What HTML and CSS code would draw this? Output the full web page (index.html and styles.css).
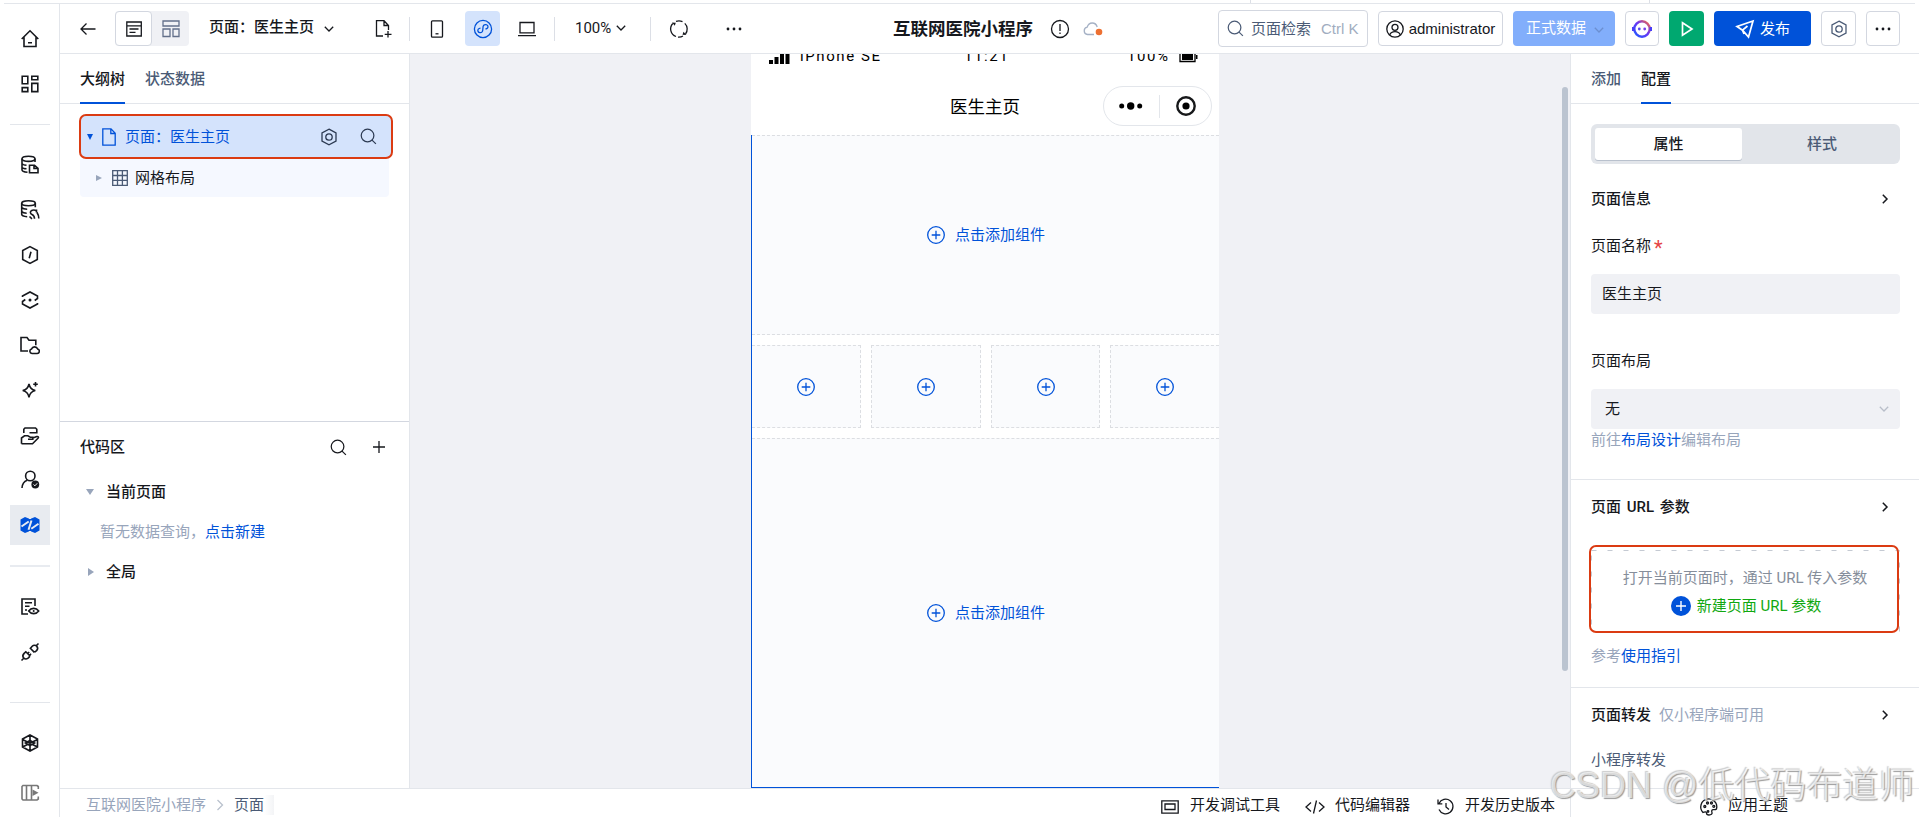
FILE: index.html
```html
<!DOCTYPE html>
<html lang="zh-CN">
<head>
<meta charset="utf-8">
<title>互联网医院小程序</title>
<link rel="stylesheet" href="styles.css">
</head>
<body>
<svg class="defs" width="0" height="0">
  <symbol id="search" viewBox="0 0 18 18"><circle cx="8" cy="8" r="6.7"/><path d="M12.8 12.8l4 4"/></symbol>
  <symbol id="gearhex" viewBox="0 0 18 18"><path d="M9 1.2l7 3.6v8.4l-7 3.6-7-3.6V4.800z"/><circle cx="9" cy="9" r="3.200"/></symbol>
  <symbol id="down" viewBox="0 0 10 8"><path d="M.8 1.800L5 6l4.200-4.200"/></symbol>
  <symbol id="right" viewBox="0 0 8 10"><path d="M1.800.8L6 5 1.800 9.200"/></symbol>
  <symbol id="addc" viewBox="0 0 18 18"><circle cx="9" cy="9" r="8.300"/><path d="M9 4.700v8.600M4.700 9h8.600"/></symbol>
</svg>
<div class="app">
  <div class="topstrip"><i class="tick t1"></i><i class="tick t2"></i></div>
  <div class="main">
    <nav class="rail">
      <a class="ri"><svg viewBox="0 0 20 20"><path d="M1.700 10L10 1.800 18.300 10M4 8.200v9.300h12V8.200M8 13.800h4"/></svg></a>
      <a class="ri g5"><svg viewBox="0 0 20 20"><path d="M2.200 2.200h5.600v7.600H2.200zM11.800 2.200h6v3.600h-6zM11.800 9.400h6v8.200h-6zM2.200 13.600h5.600v4H2.200z"/></svg></a>
      <i class="rdiv g20"></i>
      <a class="ri g20"><svg viewBox="0 0 20 20"><ellipse cx="8.500" cy="3.800" rx="6.500" ry="2.600"/><path d="M2 3.800v11c0 1.400 2.500 2.300 5.500 2.500M15 3.800V7M2 8.500c.5 1 2 1.600 4.500 1.800M2 12.300c.5.800 2 1.400 4.500 1.500M9.500 10.300h5l3.500 3v4.500H9.500zM14 10.500v3h3.800"/></svg></a>
      <a class="ri g5"><svg viewBox="0 0 20 20"><ellipse cx="8.500" cy="3.300" rx="6.800" ry="2.500"/><path d="M1.700 3.300v11c0 1.300 2.500 2.200 5.500 2.400M15.300 3.300v4M1.700 7.500c1 1.200 3 1.700 5.500 1.700M1.700 11.500c1 1.200 3 1.700 5 1.700M14.500 18.800c0-2.500-.7-3.500-2.500-4.300-2-.8-2-2.800-.8-3.700 1.600-1 4-.8 5.300.2M16.500 9.500v3M18.800 18.500c.2-2.500-.5-4-1.800-6M9.500 16.500l2.500 2.300"/></svg></a>
      <a class="ri g5"><svg viewBox="0 0 20 20"><path d="M10 1.600l7.300 3.900v9L10 18.400l-7.300-3.900v-9zM11 6.800L9.200 13.200"/></svg></a>
      <a class="ri g5"><svg viewBox="0 0 20 20"><path d="M2.500 7V6L10 2l7.500 4v2.500l-2.800 2M17.500 13v1L10 18l-7.500-4v-2.500l2.800-2"/><circle class="solid" cx="10" cy="10" r="1.500"/></svg></a>
      <a class="ri g6"><svg viewBox="0 0 20 20"><path d="M8 15H1V1.500h6l2 2.700h6.800v5M12 17.500a2.300 2.300 0 0 1-.5-4.500 3.300 3.300 0 0 1 6.200 0 2.300 2.300 0 0 1-.5 4.500z"/></svg></a>
      <a class="ri g4"><svg viewBox="0 0 20 20"><path d="M9 4c.8 4 2.500 5.700 6.300 6.500C11.500 11.300 9.800 13 9 17.300 8.200 13 6.500 11.300 2.700 10.500 6.500 9.700 8.200 8 9 4zM15.500 2v4.600M13.200 4.300h4.600"/></svg></a>
      <a class="ri g6"><svg viewBox="0 0 20 20"><path d="M3.800 7V3.300L5 2h10.500l1.300 1.300v3.500H9.500M1.500 17.800V12l3-2.200h3.300l2.500 1.400h2.500v2H8M12.800 12l4-1.500c1.500-.3 2.200.7 1.200 1.700l-5.500 5.600h-11"/></svg></a>
      <a class="ri g4"><svg viewBox="0 0 20 20"><circle cx="10.300" cy="6" r="4.700"/><path d="M2 18c.2-4 2-6.600 5.200-7.800"/><circle class="solid" cx="15.300" cy="14.500" r="3.900"/><path class="wh" d="M13.500 14.500l1.400 1.300 2.300-2.500"/></svg></a>
      <a class="ri g5 on"><svg viewBox="0 0 20 20"><path class="fill" d="M.5 4.500L5 2l5 2 5-2 4.500 2.500v11L15 18l-5-2-5 2-4.500-2.500z"/><path class="cut" d="M1.500 11.500L8.700 6.500M18.500 8.800L11.300 13.800M11.500 5.500L8.500 14.800M10 1v3M10 16v3"/></svg></a>
      <i class="rdiv thick g20"></i>
      <a class="ri g20"><svg viewBox="0 0 20 20"><path d="M8 17H2V2h13v7M5 5.800h7M5 9.300h4.500M5 13h2"/><path d="M8.700 14c2.500-3.500 7.500-3.500 10 0-2.500 3.500-7.500 3.500-10 0z"/><circle class="solid" cx="13.700" cy="14" r="1"/></svg></a>
      <a class="ri g5"><svg viewBox="0 0 20 20"><path d="M1.500 18.500l2-2M16.500 3.500l2-2M9.800 5.800l4.600 4.600M5.300 9.300l5 5M10.500 6.200l1.700-2c1.300-1.300 3.400-1.300 4.500-.1s1.100 3.200-.1 4.500l-2 1.500M5.800 9.800l-1.700 1.600c-1.300 1.400-1.500 3.500-.3 4.700s3.300 1 4.600-.2l1.600-1.800M7.700 11.500l1.500-1.500M9.800 13l1.300-1.300"/></svg></a>
      <i class="rdiv g30"></i>
      <a class="ri g20"><svg viewBox="0 0 20 20"><path d="M10 2l7.500 4v8L10 18l-7.500-4V6zM10 2v16M2.500 6.500L17 13.800M17.500 6.500L3 13.800"/><path d="M5.500 10L10 7.500l4.500 2.500L10 12.500z"/></svg></a>
      <a class="ri g10 dim"><svg viewBox="0 0 20 20"><path d="M18.300 6V3.500L17 2.500H3L2 3.500v12.500l1 1h14l1.300-1V13.500M6.500 2.500v14.500M11.500 2.500v14.500"/><path class="solid" d="M12.500 6.500l6 3.200-6 3.200z"/></svg></a>
    </nav>
    <div class="work">
      <header class="hd">
        <svg class="ic back" viewBox="0 0 16 14"><path d="M15.500 7H1M6.500 1.500L1 7l5.500 5.500"/></svg>
        <div class="seg"><span class="on"><svg class="ic" width="18" height="18" viewBox="0 0 18 18"><path d="M1.800 2h14.500v14H1.800zM1.800 5.800h14.500M4.500 9h9M4.500 12.300h6"/></svg></span><span><svg class="ic" width="18" height="18" viewBox="0 0 18 18"><path d="M1 1h16v5H1zM1 9h7v7.500H1zM11 9h6v7.500h-6z"/></svg></span></div>
        <b class="pname">页面：医生主页</b>
        <svg class="ic c1" width="10" height="8"><use href="#down"/></svg>
        <svg class="ic newf" width="18" height="20" viewBox="0 0 18 20"><path d="M8 17H1.500V1.700h7.500l4.500 4.800V11M9 2v4.500h4.500M9.700 15.300h6.800M13 12v6.600"/></svg>
        <i class="vd v1"></i>
        <svg class="ic ph" width="14" height="18" viewBox="0 0 14 18"><rect x="1.500" y=".8" width="11" height="16.400" rx="1"/><path d="M5.500 13.800h3"/></svg>
        <span class="mini"><svg class="ic" width="20" height="20" viewBox="0 0 20 20"><circle cx="10" cy="10" r="8.600"/><path d="M7.500 9.200c-2 .2-3 1.500-2.600 2.800.5 1.800 3 2.200 4.200.8.800-1 .8-2 .8-3.200 0-1.500 0-2.500.8-3.300 1.300-1.300 3.600-.8 4.200.8.400 1.500-.6 2.500-2.400 2.900"/></svg></span>
        <svg class="ic lap" width="20" height="16" viewBox="0 0 20 16"><path d="M3 1.500h14v10.300H3zM1 14.700h18"/></svg>
        <i class="vd v2"></i>
        <span class="zoom">100%</span>
        <svg class="ic c2" width="10" height="8"><use href="#down"/></svg>
        <i class="vd v3"></i>
        <svg class="ic sync" width="20" height="20" viewBox="0 0 20 20"><path d="M3.800 4.500A8 8 0 0 0 7 17.500M9 18.100A8 8 0 0 0 14 17M7 2.400A8 8 0 0 1 13.500 2.700M15.800 4.400A8 8 0 0 1 16.500 15"/><path class="solid" d="M3 3.500l3.800.3-1 3zM17.300 16l-3.800-.3 1-3z"/></svg>
        <svg class="dots d1" width="16" height="4" viewBox="0 0 16 4"><circle cx="2" cy="2" r="1.400"/><circle cx="8" cy="2" r="1.400"/><circle cx="14" cy="2" r="1.400"/></svg>
        <b class="title">互联网医院小程序</b>
        <svg class="ic info" width="20" height="20" viewBox="0 0 20 20"><circle cx="10" cy="10" r="8.500"/><path d="M10 5v7M10 13.600v1.400"/></svg>
        <svg class="cloud" width="20" height="14" viewBox="0 0 20 14"><path d="M11 12.500H4.500a3.700 3.700 0 0 1-.3-7.300C5 2.300 7 1 9.200 1c2.500 0 4.300 1.500 5 4"/><circle cx="16" cy="10" r="3.300"/></svg>
        <div class="box find"><svg class="ic" width="17" height="17"><use href="#search"/></svg><span>页面检索</span><kbd>Ctrl K</kbd></div>
        <div class="box user"><svg class="ic" width="18" height="18" viewBox="0 0 18 18"><circle cx="9" cy="9" r="8.200"/><circle cx="9" cy="7.300" r="3"/><path d="M3.700 15c1-2.600 3-3.300 5.300-3.300s4.300.7 5.300 3.300"/></svg><span>administrator</span></div>
        <div class="btn data"><span>正式数据</span><svg class="ic" width="10" height="8"><use href="#down"/></svg></div>
        <div class="box bot"><svg width="20" height="20" viewBox="0 0 20 20"><defs><linearGradient id="bg" x1="0" y1="1" x2="1" y2="0"><stop offset="0" stop-color="#1f5bff"/><stop offset=".55" stop-color="#6a35f5"/><stop offset="1" stop-color="#ff6a3c"/></linearGradient></defs><circle cx="10" cy="10" r="7.700" fill="#fff" stroke="url(#bg)" stroke-width="2.400"/><path d="M1.200 8v4M18.800 8v4" stroke="#4a3df5" stroke-width="2.400"/><circle cx="7.300" cy="10" r="1.400" fill="#5a4af0"/><circle cx="12.700" cy="10" r="1.400" fill="#7a3fe8"/></svg></div>
        <div class="btn run"><svg class="ic" width="14" height="16" viewBox="0 0 14 16"><path d="M2.500 1.800L12 8l-9.500 6.200z"/></svg></div>
        <div class="btn pub"><svg class="ic" width="18" height="18" viewBox="0 0 18 18"><path d="M17 1L1 6.500l5.500 3.700L12.500 17zM6.500 10.200l5-4.200M6.500 10.200L8 14"/></svg><span>发布</span></div>
        <div class="box hexb"><svg class="ic" width="18" height="18"><use href="#gearhex"/></svg></div>
        <div class="box more"><svg class="dots" width="16" height="4" viewBox="0 0 16 4"><circle cx="2" cy="2" r="1.400"/><circle cx="8" cy="2" r="1.400"/><circle cx="14" cy="2" r="1.400"/></svg></div>
      </header>
      <div class="cols">
        <aside class="left">
          <div class="tabs"><b class="on">大纲树</b><b>状态数据</b></div>
          <div class="tree">
            <div class="row sel"><i class="tri dn"></i><svg class="ic fi" width="14" height="18" viewBox="0 0 14 18"><path d="M.8.800H9l4.200 4.500v11.900H.8zM8.800 1v4.500h4.200"/></svg><span>页面：医生主页</span><svg class="ic gx" width="18" height="18"><use href="#gearhex"/></svg><svg class="ic sx" width="17" height="17"><use href="#search"/></svg></div>
            <div class="row sub"><i class="tri rt"></i><svg class="ic gr" width="16" height="16" viewBox="0 0 16 16"><path d="M.7.7h14.600v14.600H.7zM.7 5.500h14.600M.7 10.400h14.600M5.500.7v14.600M10.400.7v14.600"/></svg><span>网格布局</span></div>
          </div>
          <div class="code">
            <div class="chead"><b>代码区</b><svg class="ic s" width="17" height="17"><use href="#search"/></svg><svg class="ic" width="12" height="12" viewBox="0 0 12 12"><path d="M6 0v12M0 6h12"/></svg></div>
            <div class="crow"><i class="tri dn"></i><b>当前页面</b></div>
            <div class="cnote">暂无数据查询，<a>点击新建</a></div>
            <div class="crow"><i class="tri rt"></i><b>全局</b></div>
          </div>
        </aside>
        <section class="canvas">
          <div class="phone">
            <div class="status"><svg class="sig" width="21" height="10" viewBox="0 0 21 10"><path d="M0 6h4v4H0zM5.500 3h4v7h-4zM11 0h4v10h-4zM16.500 0h4v10h-4z"/></svg><span class="dev">iPhone SE</span><span class="clock">11:21</span><span class="pct">100%</span><svg class="bat" width="19" height="9" viewBox="0 0 19 9"><path d="M1 0v7.500h15V0" fill="none" stroke="#000" stroke-width="1.300"/><path d="M3 0h11v6H3zM17 1h1.500v4H17z"/></svg></div>
            <div class="nav"><span>医生主页</span><div class="caps"><svg width="24" height="8" viewBox="0 0 24 8"><circle cx="2.700" cy="4" r="2.500"/><circle cx="11.700" cy="4" r="3.700"/><circle cx="20.700" cy="4" r="2.500"/></svg><i></i><svg width="20" height="20" viewBox="0 0 20 20"><circle cx="10" cy="10" r="8.700" fill="none" stroke="#17181a" stroke-width="2.400"/><circle cx="10" cy="10" r="3.600"/></svg></div></div>
            <div class="page">
              <div class="slot a"><svg class="ic" width="18" height="18"><use href="#addc"/></svg><span>点击添加组件</span></div>
              <div class="cells"><div><svg class="ic" width="18" height="18"><use href="#addc"/></svg></div><div><svg class="ic" width="18" height="18"><use href="#addc"/></svg></div><div><svg class="ic" width="18" height="18"><use href="#addc"/></svg></div><div><svg class="ic" width="18" height="18"><use href="#addc"/></svg></div></div>
              <div class="slot b"><svg class="ic" width="18" height="18"><use href="#addc"/></svg><span>点击添加组件</span></div>
            </div>
          </div>
          <i class="thumb"></i>
        </section>
        <aside class="right">
          <div class="tabs"><b>添加</b><b class="on">配置</b></div>
          <div class="sw"><b class="on">属性</b><b>样式</b></div>
          <div class="sec s1"><b>页面信息</b><svg class="ic" width="8" height="10"><use href="#right"/></svg></div>
          <div class="lab l1">页面名称<em>*</em></div>
          <div class="inp">医生主页</div>
          <div class="lab l2">页面布局</div>
          <div class="inp pick"><span>无</span><svg class="ic" width="10" height="8"><use href="#down"/></svg></div>
          <div class="hint">前往<a>布局设计</a>编辑布局</div>
          <div class="sec s2"><b>页面 URL 参数</b><svg class="ic" width="8" height="10"><use href="#right"/></svg></div>
          <div class="url"><div class="dash"><svg class="edge" width="309" height="82" viewBox="0 0 309 82"><path d="M.5.5h308v81H.5z"/></svg><p>打开当前页面时，通过 URL 传入参数</p><p class="new"><svg width="20" height="20" viewBox="0 0 20 20"><circle cx="10" cy="10" r="10"/><path d="M10 5v10M5 10h10"/></svg>新建页面 URL 参数</p></div><i class="mark"></i></div>
          <div class="hint h2">参考<a>使用指引</a></div>
          <div class="sec s3"><b>页面转发</b><span>仅小程序端可用</span><svg class="ic" width="8" height="10"><use href="#right"/></svg></div>
          <div class="lab l3">小程序转发</div>
        </aside>
      </div>
      <footer class="ft">
        <div class="crumb">互联网医院小程序<svg class="ic" width="8" height="12" viewBox="0 0 8 12"><path d="M1.500 1L6.500 6l-5 5"/></svg><span>页面</span><i></i></div>
        <div class="tool k1"><svg class="ic" width="18" height="14" viewBox="0 0 18 14"><path d="M.8.800h16.400v12.400H.8zM4 4h10v5.500H4z"/></svg>开发调试工具</div>
        <div class="tool k2"><svg class="ic" width="20" height="14" viewBox="0 0 20 14"><path d="M6 2.500L1 7l5 4.500M14 2.500L19 7l-5 4.500M11.500.5l-3 13"/></svg>代码编辑器</div>
        <div class="tool k3"><svg class="ic" width="17" height="17" viewBox="0 0 17 17"><path d="M2 5.500A7.300 7.300 0 1 1 2 11.500M1 1.500v4.300h4.300M9 5v4l3 2.500"/></svg>开发历史版本</div>
        <div class="tool k4"><svg class="ic" width="18" height="18" viewBox="0 0 18 18"><path d="M3 14.500A8 8 0 1 1 16.500 11c-1 1-2.500.5-3.500.7-1.500.3-1.500 1.500-1 2.800.5 1.500-1 2.500-3 2.500-1.700 0-2.500-.8-2.500-2 0-1.300-1.500-1.500-3.500-.5z"/><circle cx="4.800" cy="8.500" r="1"/><circle cx="7.500" cy="5" r="1"/><circle cx="11.500" cy="5" r="1"/><circle cx="13.800" cy="8.300" r="1"/><circle cx="8" cy="13.500" r=".8"/></svg>应用主题</div>
      </footer>
    </div>
  </div>
  <div class="wm">CSDN @低代码布道师</div>
</div>
</body>
</html>
```
FILE: styles.css
```css
* { box-sizing: border-box; }
body { margin: 0; background: #fff; overflow: hidden; font: 15px/20px Roboto, "Noto Sans CJK SC", sans-serif; color: #16181d; }
b { font-weight: 500; }
i { display: block; }
p { margin: 0; }
a { color: #0052d9; }
svg { display: block; flex: none; }
.defs { position: absolute; }
.ic { fill: none; stroke: currentColor; stroke-width: 1.3; overflow: visible; }
.ic .solid { fill: currentColor; stroke: none; }
.app { position: relative; display: flex; flex-direction: column; width: 1919px; height: 817px; overflow: hidden; }
.topstrip { position: relative; height: 4px; margin: 0 4px; border-bottom: 1px solid #e3e6eb; flex: none; }
.tick { position: absolute; top: 0; width: 1px; height: 3px; background: #dcdfe6; }
.t1 { left: 1246px; }
.t2 { left: 1645px; }
.main { display: flex; flex: 1; min-height: 0; }

.rail { width: 60px; flex: none; border-right: 1px solid #e3e6eb; padding: 15px 0 0 10px; display: flex; flex-direction: column; }
.ri { width: 40px; height: 40px; flex: none; display: flex; align-items: center; justify-content: center; color: #16181d; }
.ri svg { width: 20px; height: 20px; fill: none; stroke: currentColor; stroke-width: 1.6; }
.ri .solid { fill: currentColor; stroke: none; }
.ri .wh { stroke: #fff; stroke-width: 1; }
.ri.on { background: #e8ebf0; }
.ri .fill { fill: #0052d9; stroke: none; }
.ri .cut { stroke: #e8ebf0; stroke-width: 2; }
.ri.dim { color: #777; }
.rdiv { width: 40px; height: 1px; background: #e3e6eb; flex: none; }
.rdiv.thick { height: 2px; background: #e8ebf0; }
.g4 { margin-top: 4px; }
.g5 { margin-top: 5px; }
.g6 { margin-top: 6px; }
.g10 { margin-top: 10px; }
.g20 { margin-top: 20px; }
.g30 { margin-top: 30px; }
.rdiv + .ri { margin-top: 20px; }

.work { flex: 1; min-width: 0; display: flex; flex-direction: column; }
.hd { height: 50px; flex: none; border-bottom: 1px solid #e3e6eb; display: flex; align-items: center; padding-left: 20px; white-space: nowrap; }
.back { width: 16px; height: 14px; }
.seg { display: flex; width: 74px; height: 35px; margin-left: 19px; background: #f0f1f5; border-radius: 4px; }
.seg span { width: 37px; display: flex; align-items: center; justify-content: center; color: #63708a; }
.seg .on { background: #fff; border: 1px solid #d3d7e0; border-radius: 4px; color: #16181d; }
.pname { width: 105px; margin: -3px 0 0 20px; }
.c1 { margin-left: 10px; }
.newf { margin-left: 41px; }
.vd { width: 1px; height: 24px; background: #dcdfe6; }
.v1 { margin-left: 16px; }
.ph { margin-left: 20px; }
.mini { width: 35px; height: 35px; margin-left: 21px; border-radius: 4px; background: #d4e3fc; color: #0052d9; display: flex; align-items: center; justify-content: center; }
.lap { margin-left: 17px; }
.v2 { margin-left: 17px; }
.zoom { width: 36px; margin: -2px 0 0 20px; }
.c2 { margin: -2px 0 0 5px; }
.v3 { margin-left: 24px; }
.sync { margin-left: 18px; }
.dots { fill: #16181d; }
.d1 { margin-left: 37px; }
.title { width: 140px; margin-left: 151px; font-size: 17.5px; font-weight: 700; }
.info { margin-left: 17px; }
.cloud { margin-left: 13px; fill: none; stroke: #a5b1c5; stroke-width: 1.3; }
.cloud circle { fill: #ed7032; stroke: none; }
.box, .btn { height: 35px; border-radius: 4px; display: flex; align-items: center; flex: none; margin-left: 10px; }
.box { border: 1px solid #d3d7e0; background: #fff; justify-content: center; }
.find { width: 150px; height: 37px; margin-left: 115px; justify-content: flex-start; padding-left: 8px; color: #4b5b76; }
.find span { margin-left: 7px; }
.find kbd { margin-left: 10px; color: #a1adc0; font: 15px/20px "Liberation Sans", sans-serif; }
.user { width: 125px; font-family: "Liberation Sans", sans-serif; gap: 5px; }
.data { width: 102px; background: #82aefb; color: #fff; padding-left: 13px; }
.data span { margin-top: -2px; }
.data .ic { margin: 3px 0 0 8px; color: #6b8fd0; }
.bot { width: 34px; }
.run { width: 35px; background: #00a870; color: #fff; justify-content: center; }
.run .ic, .pub .ic { stroke-width: 1.7; }
.pub { width: 97px; background: #0052d9; color: #fff; padding-left: 22px; gap: 6px; }
.hexb { width: 35px; color: #4b5b76; }
.more { width: 34px; }

.cols { flex: 1; min-height: 0; display: flex; }
.tabs { height: 50px; flex: none; border-bottom: 1px solid #e3e6eb; padding-left: 20px; display: flex; gap: 20px; color: #4b5b76; }
.tabs b { height: 50px; line-height: 50px; }
.tabs .on { color: #16181d; border-bottom: 2px solid #0052d9; }
.left { width: 350px; flex: none; border-right: 1px solid #e3e6eb; display: flex; flex-direction: column; }
.tree { height: 317px; padding: 10px 0 0 19px; }
.row { display: flex; align-items: center; }
.sel { width: 314px; height: 45px; border: 2px solid #db3b12; border-radius: 7px; background: #d4e3fc; color: #0052d9; padding-left: 6px; }
.tri { width: 0; height: 0; flex: none; border: 3.5px solid transparent; }
.tri.dn { border-top: 6px solid currentColor; border-bottom: 0; }
.tri.rt { border-left: 6px solid currentColor; border-right: 0; }
.fi { margin-left: 9px; }
.sel span { margin-left: 9px; width: 105px; }
.gx { margin-left: 90px; color: #2c3a52; }
.sx { margin-left: 22px; color: #2c3a52; }
.sub { width: 309px; height: 38px; margin-left: 1px; background: #f5f8ff; border-radius: 0 0 4px 4px; padding-left: 16px; }
.sub .tri, .crow .tri { color: #98a5bb; }
.gr { margin-left: 10px; color: #4b5b76; }
.sub span { margin: -1px 0 0 7px; }
.code { border-top: 1px solid #d3d7e0; padding: 5px 0 0 20px; }
.chead { height: 40px; display: flex; align-items: center; }
.chead .s { margin: 0 26px 0 205px; }
.crow { height: 40px; display: flex; align-items: center; padding-left: 6px; margin-top: 5px; }
.crow .tri.dn { margin-right: 12px; border-width: 6px 4px 0; }
.crow .tri.rt { margin-right: 12px; margin-left: 2px; border-width: 4px 0 4px 6px; }
.cnote { height: 40px; line-height: 40px; padding-left: 20px; color: #98a5bb; }
.cnote + .crow { margin-top: 0; }

.canvas { position: relative; flex: 1; background: #f0f1f5; padding-left: 341px; }
.phone { width: 468px; height: 734px; background: #fff; }
.status { height: 11px; overflow: hidden; display: flex; align-items: flex-start; padding-left: 18px; line-height: 20px; letter-spacing: 1.6px; color: #000; }
.status span { margin-top: -8px; white-space: nowrap; flex: none; }
.dev { width: 80px; margin-left: 10px; }
.clock { width: 42px; margin-left: 84px; }
.pct { width: 42px; margin-left: 121px; }
.bat { margin-left: 10px; }
.nav { height: 70px; padding: 21px 7px 0 199px; display: flex; justify-content: space-between; font-size: 17.5px; color: #000; }
.nav > span { line-height: 42px; }
.caps { width: 109px; height: 40px; border: 1px solid #e3e6eb; border-radius: 20px; display: flex; align-items: center; padding-left: 15px; }
.caps i { width: 1px; height: 23px; background: #e3e6eb; margin: 0 16px; }
.page { height: 653px; border-left: 1px solid #0052d9; border-bottom: 1px solid #0052d9; }
.slot { background: #fafbfd; border-top: 1px dashed #dcdee2; display: flex; align-items: center; color: #0052d9; padding-left: 175px; gap: 10px; }
.slot.a { height: 200px; border-bottom: 1px dashed #dcdee2; }
.slot.b { height: 349px; }
.cells { padding: 10px 0; display: grid; grid-template-columns: 109px 110px 109px 109px; column-gap: 10px; }
.cells div { height: 83px; background: #fafbfd; border: 1px dashed #dcdee2; display: flex; align-items: center; justify-content: center; color: #0052d9; }
.cells div:first-child { border-left: 0; }
.cells div:last-child { border-right: 0; }
.thumb { position: absolute; left: 1152px; top: 33px; width: 6px; height: 584px; border-radius: 3px; background: #bbc4d0; }

.right { width: 349px; flex: none; border-left: 1px solid #e3e6eb; overflow: hidden; }
.sw { width: 309px; height: 40px; margin: 20px 0 0 20px; padding: 4px 0 4px 4px; border-radius: 6px; background: #e2e5ea; display: flex; text-align: center; line-height: 32px; color: #4b5b76; }
.sw b { flex: 1; padding-left: 2px; }
.sw .on { flex: 0 0 147px; padding: 0; background: #fff; border-radius: 3px; color: #16181d; box-shadow: 0 1px 0 #b9c1cd; }
.sec { height: 40px; display: flex; align-items: center; padding: 0 30px 0 20px; }
.sec .ic { margin-left: auto; stroke-width: 1.5; }
.s1 { margin-top: 15px; }
.lab { padding-left: 20px; height: 20px; }
.l1 { margin-top: 17px; }
.lab em { color: #e54545; font: 20px/16px Roboto, sans-serif; vertical-align: -4px; margin-left: 3px; }
.inp { width: 309px; height: 40px; margin: 18px 0 0 20px; border-radius: 4px; background: #f0f1f5; padding: 0 11px; line-height: 41px; }
.l2 { margin-top: 37px; }
.pick { display: flex; align-items: center; justify-content: space-between; padding-left: 14px; line-height: 37px; }
.pick .ic { color: #b8bec9; }
.hint { padding-left: 20px; color: #98a5bb; margin-top: 1px; }
.s2 { margin-top: 29px; border-top: 1px solid #e3e6eb; height: 54px; word-spacing: 2px; }
.url { position: relative; margin: 17px 0 0 19px; width: 310px; }
.dash { position: relative; height: 82px; text-align: center; color: #868e9b; padding-top: 18px; }
.edge { position: absolute; left: 1px; top: 0; fill: none; stroke: #c5cad3; stroke-dasharray: 5 11; }
.dash .new { display: flex; justify-content: center; gap: 6px; margin-top: 8px; color: #10a810; padding-left: 2px; }
.new circle { fill: #0052d9; }
.new path { stroke: #fff; stroke-width: 1.4; }
.mark { position: absolute; left: -1px; top: -5px; width: 310px; height: 88px; border: 2px solid #db3b12; border-radius: 7px; }
.h2 { margin-top: 14px; }
.s3 { margin-top: 21px; border-top: 1px solid #e3e6eb; height: 54px; }
.s3 span { margin-left: 8px; color: #98a5bb; }
.l3 { margin-top: 9px; color: #4b5b76; }

.ft { height: 29px; flex: none; border-top: 1px solid #e3e6eb; display: flex; align-items: flex-start; padding: 6px 0 0 26px; white-space: nowrap; }
.crumb { display: flex; align-items: center; color: #98a5bb; width: 1075px; }
.crumb .ic { margin: 0 10px; color: #b9c1cd; }
.crumb span { color: #4b5b76; }
.crumb i { width: 10px; height: 20px; background: linear-gradient(90deg, #fff, #f3f4f6); }
.tool { display: flex; align-items: center; }
.tool .ic { margin-top: 3px; }
.k1 { gap: 11px; }
.k2 { gap: 10px; margin-left: 25px; }
.k3 { gap: 11px; margin-left: 27px; }
.k4 { gap: 10px; margin-left: 15px; border-left: 1px solid #e3e6eb; height: 28px; margin-top: -6px; padding: 4px 0 0 129px; }
.wm { position: absolute; left: 1550px; top: 761px; font: 36px/50px "Liberation Sans", "Noto Sans CJK SC", sans-serif; font-weight: 300; color: rgba(255,255,255,.65); text-shadow: 1px 1px 1px #999, -1px -1px 1px #ccc; white-space: nowrap; }
```
